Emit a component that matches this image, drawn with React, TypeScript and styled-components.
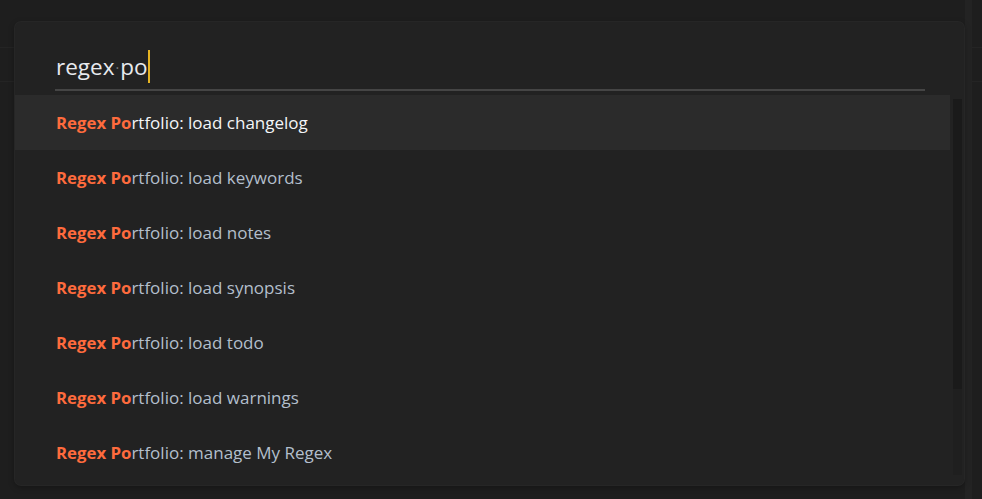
import React from "react";
import styled, { createGlobalStyle } from "styled-components";

const Global = createGlobalStyle`
  html, body { margin: 0; padding: 0; }
  body {
    background-color: #1e1e1e;
    background-image:
      linear-gradient(to right, transparent 965px, #232323 965px, #232323 972px, transparent 972px),
      linear-gradient(to bottom, transparent 47px, #242424 47px, #242424 48px, transparent 48px, transparent 81px, #242424 81px, #242424 82px, transparent 82px);
    background-repeat: no-repeat;
    width: 982px;
    height: 499px;
    overflow: hidden;
    font-family: "Open Sans", "Noto Sans", sans-serif;
  }
`;

const Page = styled.div`
  padding: 22px 18px 0 15px;
  height: 499px;
  box-sizing: border-box;
`;

const Modal = styled.div`
  width: 949px;
  height: 463px;
  background: #222222;
  border-radius: 6px;
  box-shadow: 0 0 0 1px #262626, 0 2px 6px rgba(0, 0, 0, 0.35);
  overflow: hidden;
  display: flex;
  flex-direction: column;
`;

const InputArea = styled.div`
  padding: 24px 39px 0 40px;
`;

const Input = styled.div`
  height: 45px;
  border-bottom: 2px solid #454545;
  display: flex;
  align-items: center;
  font-size: 22.5px;
  color: #e8eaee;
  padding-left: 1px;
  padding-bottom: 3px;
  box-sizing: border-box;
`;

const Space = styled.span`
  color: #7a7a7a;
  font-size: 14px;
  padding: 0 1px;
  position: relative;
  top: 1px;
`;

const Caret = styled.span`
  display: inline-block;
  width: 2px;
  height: 33px;
  background: #e6b422;
  margin-left: 1px;
`;

const Body = styled.div`
  display: flex;
  margin-top: 4px;
  flex: 1;
  min-height: 0;
`;

const List = styled.div`
  flex: 1;
  display: flex;
  flex-direction: column;
`;

const Row = styled.div<{ $active?: boolean }>`
  height: 55px;
  flex: 0 0 55px;
  display: flex;
  align-items: center;
  padding-left: 41px;
  font-size: 17px;
  white-space: pre;
  background: ${(p) => (p.$active ? "#2b2b2b" : "transparent")};
  color: ${(p) => (p.$active ? "#f4f6f8" : "#b3bfcc")};
`;

const Match = styled.span`
  color: #ff6b3d;
  font-weight: 700;
  font-size: 16.8px;
`;

const Track = styled.div`
  width: 9px;
  margin: 4px 2px 10px 3px;
  background: #1f1f1f;
  display: flex;
  flex-direction: column;
`;

const Thumb = styled.div`
  height: 290px;
  background: #1a1a1a;
`;

const items = [
  "load changelog",
  "load keywords",
  "load notes",
  "load synopsis",
  "load todo",
  "load warnings",
  "manage My Regex",
];

export default function App() {
  return (
    <>
      <Global />
      <Page>
        <Modal>
          <InputArea>
            <Input>
              regex<Space>·</Space>po<Caret />
            </Input>
          </InputArea>
          <Body>
            <List>
              {items.map((t, i) => (
                <Row key={t} $active={i === 0}>
                  <Match>Regex Po</Match>rtfolio: {t}
                </Row>
              ))}
            </List>
            <Track>
              <Thumb />
            </Track>
          </Body>
        </Modal>
      </Page>
    </>
  );
}
